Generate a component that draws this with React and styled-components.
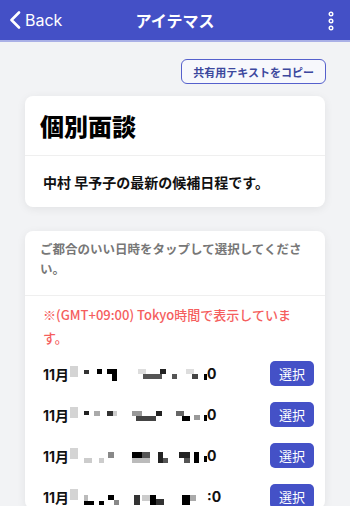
import React from "react";
import styled, { createGlobalStyle } from "styled-components";

const GlobalStyle = createGlobalStyle`
  body {
    margin: 0;
    background: #f2f3f5;
    font-family: "Inter", "Noto Sans CJK JP", sans-serif;
  }
`;

// mosaic blocks for the blurred times: [x, y, w, h, colour]
const mosaics = [
  [
    [0, 0, 8, 11, "#d4d4d4"], [14, 4, 5, 4, "#333"], [27, 3, 5, 5, "#000"],
    [37, 3, 10, 5, "#000"], [42, 8, 5, 7, "#000"], [68, 3, 8, 5, "#ddd"],
    [73, 8, 19, 5, "#555"], [90, 3, 6, 5, "#222"], [102, 8, 5, 5, "#555"],
    [116, 3, 8, 5, "#ddd"], [122, 8, 6, 5, "#444"], [134, 8, 3, 6, "#000"],
  ],
  [
    [0, 0, 8, 11, "#d4d4d4"], [14, 4, 5, 4, "#222"], [24, 4, 6, 5, "#aaa"],
    [37, 4, 6, 5, "#333"], [43, 4, 4, 5, "#ccc"], [62, 4, 10, 5, "#999"],
    [66, 9, 20, 5, "#444"], [86, 4, 6, 5, "#222"], [106, 4, 8, 5, "#666"],
    [112, 9, 8, 5, "#000"], [124, 8, 6, 5, "#999"], [134, 8, 3, 6, "#000"],
  ],
  [
    [0, 0, 8, 11, "#d4d4d4"], [14, 10, 8, 5, "#ccc"], [29, 10, 5, 5, "#ccc"],
    [38, 4, 6, 6, "#888"], [62, 4, 10, 6, "#000"], [72, 4, 8, 6, "#555"],
    [62, 10, 18, 5, "#bbb"], [88, 4, 5, 11, "#222"], [93, 10, 5, 5, "#555"],
    [109, 4, 11, 6, "#222"], [114, 10, 6, 5, "#555"], [124, 4, 5, 11, "#000"],
    [134, 8, 3, 6, "#000"],
  ],
  [
    [0, 0, 8, 11, "#d4d4d4"], [14, 6, 4, 8, "#bbb"], [14, 12, 10, 4, "#000"],
    [29, 12, 5, 4, "#000"], [38, 6, 6, 5, "#000"], [44, 11, 5, 5, "#888"],
    [64, 6, 6, 10, "#333"], [72, 6, 8, 6, "#ccc"], [80, 6, 6, 10, "#000"],
    [86, 10, 8, 6, "#333"], [112, 6, 8, 10, "#000"], [120, 6, 6, 6, "#aaa"],
  ],
];

const Mosaic = ({ blocks }) => (
  <svg width="140" height="16" viewBox="0 0 140 16">
    {blocks.map(([x, y, w, h, c], i) => (
      <rect key={i} x={x} y={y} width={w} height={h} fill={c} />
    ))}
  </svg>
);

const ChevronLeft = () => (
  <svg width="12" height="18" viewBox="0 0 12 18">
    <path
      d="M10 1.5L2.5 9l7.5 7.5"
      fill="none"
      stroke="#fff"
      strokeWidth="2.6"
      strokeLinecap="round"
      strokeLinejoin="round"
    />
  </svg>
);

const Kebab = () => (
  <svg width="6" height="20" viewBox="0 0 6 20">
    {[3, 10, 17].map(cy => (
      <circle key={cy} cx="3" cy={cy} r="1.8" fill="none" stroke="#fff" strokeWidth="1.4" />
    ))}
  </svg>
);

const App = () => {
  return (
    <>
      <GlobalStyle />
      <Page>
        <Header>
          <BackButton>
            <ChevronLeft />
            <span>Back</span>
          </BackButton>
          <Title>アイテマス</Title>
          <MenuButton>
            <Kebab />
          </MenuButton>
        </Header>

        <Content>
          <CopyRow>
            <CopyButton>共有用テキストをコピー</CopyButton>
          </CopyRow>

          <Card>
            <CardTitle>個別面談</CardTitle>
            <Divider />
            <Lead>中村 早予子の最新の候補日程です。</Lead>
          </Card>

          <Card $gap>
            <Hint>ご都合のいい日時をタップして選択してください。</Hint>
            <Divider />
            <Notice>※(GMT+09:00) Tokyo時間で表示しています。</Notice>
            <SlotList>
              {mosaics.map((blocks, i) => (
                <Slot key={i}>
                  <SlotDate>
                    <span>11月</span>
                    <Mosaic blocks={blocks} />
                    <Tail>{i === 3 ? ":0" : "0"}</Tail>
                  </SlotDate>
                  <SelectButton>選択</SelectButton>
                </Slot>
              ))}
            </SlotList>
          </Card>
        </Content>
      </Page>
    </>
  );
};

const Page = styled.div`
  width: 350px;
  height: 506px;
  overflow: hidden;
  background: #f2f3f5;
`;

const Header = styled.header`
  height: 40px;
  background: #4450c6;
  border-bottom: 2px solid #aab0e6;
  display: flex;
  align-items: center;
  justify-content: space-between;
  padding: 0 16px 0 9px;
  position: relative;
  color: #fff;
`;

const BackButton = styled.div`
  display: flex;
  align-items: center;
  gap: 4px;
  font-size: 16px;
`;

const Title = styled.div`
  position: absolute;
  left: 0;
  right: 0;
  text-align: center;
  font-size: 16px;
  font-weight: 700;
  pointer-events: none;
`;

const MenuButton = styled.div`
  display: flex;
  align-items: center;
  padding-top: 2px;
`;

const Content = styled.main`
  padding: 17px 25px 0;
`;

const CopyRow = styled.div`
  display: flex;
  justify-content: flex-end;
  margin-right: -1px;
`;

const CopyButton = styled.div`
  height: 23px;
  padding: 0 11px;
  border: 1px solid #5560cc;
  border-radius: 6px;
  background: #f7f8fc;
  color: #3d489e;
  font-size: 11px;
  font-weight: 700;
  display: flex;
  align-items: center;
`;

const Card = styled.section`
  margin-top: ${props => (props.$gap ? "24px" : "12px")};
  background: #fff;
  border-radius: 8px;
  box-shadow: 0 2px 10px rgba(0, 0, 0, 0.07);
  overflow: hidden;
`;

const Divider = styled.div`
  height: 1px;
  background: #efefef;
`;

const CardTitle = styled.h1`
  margin: 0;
  height: 59px;
  padding: 0 15px;
  display: flex;
  align-items: center;
  font-size: 24px;
  font-weight: 900;
  color: #000;
`;

const Lead = styled.p`
  margin: 0;
  height: 51px;
  padding: 0 18px;
  display: flex;
  align-items: center;
  font-size: 14px;
  font-weight: 700;
  color: #111;
`;

const Hint = styled.p`
  margin: 0;
  padding: 9px 12px 15px 15px;
  font-size: 12.5px;
  line-height: 20px;
  font-weight: 700;
  color: #777;
`;

const Notice = styled.p`
  margin: 0;
  padding: 7px 26px 0 18px;
  font-family: "Noto Sans CJK JP", sans-serif;
  font-size: 13px;
  line-height: 23px;
  font-weight: 500;
  color: #f55e5e;
`;

const SlotList = styled.div`
  padding: 12px 11px 0 18px;
  display: flex;
  flex-direction: column;
  gap: 16px;
`;

const Slot = styled.div`
  height: 25px;
  display: flex;
  align-items: center;
  justify-content: space-between;
`;

const SlotDate = styled.div`
  display: flex;
  align-items: center;
  font-size: 14px;
  font-weight: 700;
  color: #111;

  svg {
    margin-left: 1px;
  }
`;

const Tail = styled.span`
  margin-left: -3px;
`;

const SelectButton = styled.div`
  width: 44px;
  height: 25px;
  border-radius: 5px;
  background: #4451c7;
  color: #fff;
  font-size: 13px;
  display: flex;
  align-items: center;
  justify-content: center;
`;

export default App;
